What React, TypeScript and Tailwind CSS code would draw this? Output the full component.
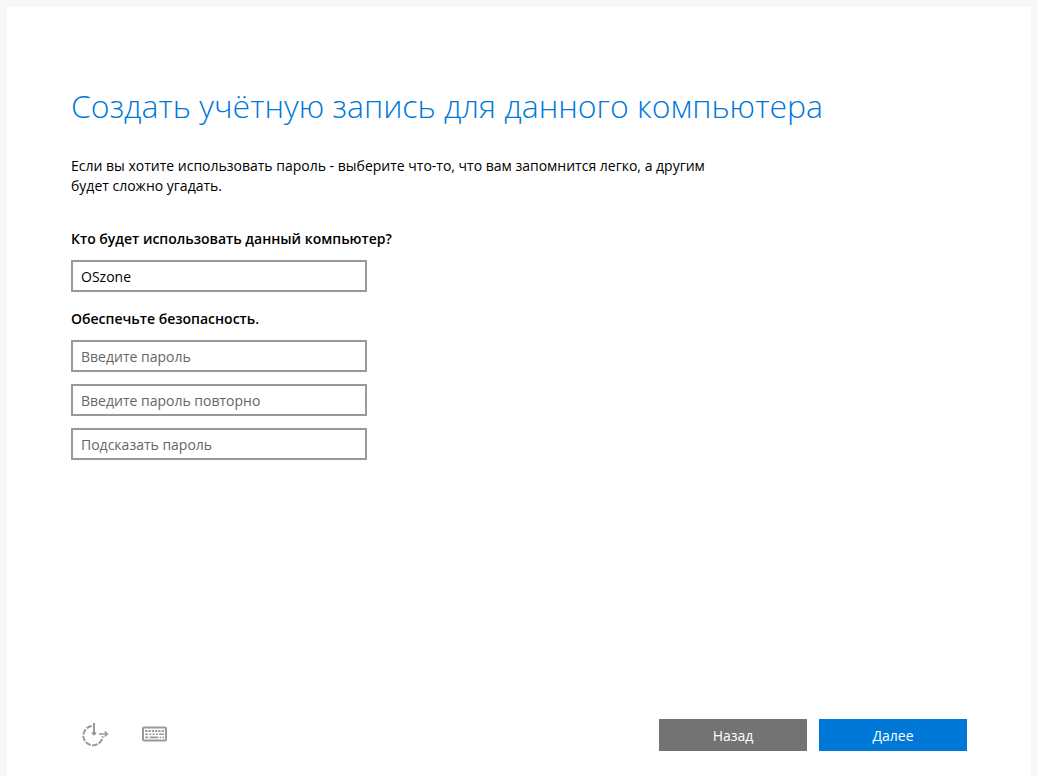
import { useState } from 'react';

const fieldClass =
  "h-8 w-full border-2 border-[#999999] bg-white px-2 text-sm text-black outline-none placeholder:text-[#666666]";

function EaseOfAccessIcon() {
  return (
    <svg className="size-8" viewBox="0 0 32 32" fill="none" stroke="#999999" strokeWidth="2" aria-hidden="true">
      <path d="M12.7 7a9.7 9.7 0 1 0 11 10.2" strokeDasharray="5.6 1.4" />
      <path d="M15 4v11.5" />
      <path d="M12.8 13.5l2.2 2.2 2.2-2.2" strokeWidth="1.6" />
      <path d="M20 15h8M25.8 12.5l2.5 2.5-2.5 2.5" strokeWidth="1.6" />
    </svg>
  );
}

function KeyboardIcon() {
  return (
    <svg className="size-8" viewBox="0 0 32 32" fill="none" stroke="#999999" aria-hidden="true">
      <rect x="4" y="8.5" width="23" height="13" rx="1" strokeWidth="2" />
      <path d="M6.2 12h18.8" strokeWidth="1.8" strokeDasharray="2.2 1.1" />
      <path d="M6.2 15.2h2.8M10.3 15.2h2M13.6 15.2h2M16.9 15.2h2M20.2 15.2h4.8" strokeWidth="1.6" />
      <path d="M6.2 18.4h3M10.7 18.4h8.5M20.6 18.4h1.6M23.4 18.4h1.6" strokeWidth="1.8" />
    </svg>
  );
}

export default function App() {
  const [name, setName] = useState('OSzone');
  return (
    <div className="flex min-h-screen bg-[#f8f8f8] pt-[7px] pr-[6px] pl-[7px] font-['Open_Sans','Noto_Sans',sans-serif] text-sm text-black">
      <main className="flex flex-1 flex-col bg-white px-16 pt-[76px] pb-[25px]">
        <h1 className="text-[32px] leading-[46px] font-light text-[#0078d7]">Создать учётную запись для данного компьютера</h1>
        <p className="mt-[27px] max-w-[660px] leading-5">
          Если вы хотите использовать пароль - выберите что-то, что вам запомнится легко, а другим будет сложно угадать.
        </p>
        <form id="account" className="mt-[33px] w-[296px]" onSubmit={(e) => e.preventDefault()}>
          <label htmlFor="user" className="block leading-5 font-semibold whitespace-nowrap">Кто будет использовать данный компьютер?</label>
          <input id="user" className={`mt-[11px] ${fieldClass}`} value={name} onChange={(e) => setName(e.target.value)} />
          <label htmlFor="password" className="mt-[17px] block leading-5 font-semibold">Обеспечьте безопасность.</label>
          <div className="mt-[11px] flex flex-col gap-3">
            <input id="password" type="password" className={fieldClass} placeholder="Введите пароль" />
            <input type="password" aria-label="Введите пароль повторно" className={fieldClass} placeholder="Введите пароль повторно" />
            <input aria-label="Подсказать пароль" className={fieldClass} placeholder="Подсказать пароль" />
          </div>
        </form>
        <footer className="mt-auto flex items-center justify-between">
          <div className="flex gap-7 pl-2">
            <button type="button" aria-label="Специальные возможности"><EaseOfAccessIcon /></button>
            <button type="button" aria-label="Экранная клавиатура"><KeyboardIcon /></button>
          </div>
          <div className="flex gap-3">
            <button type="button" className="h-8 w-[148px] bg-[#737373] pt-0.5 text-white">Назад</button>
            <button form="account" type="submit" className="h-8 w-[148px] bg-[#0078d7] pt-0.5 text-white">Далее</button>
          </div>
        </footer>
      </main>
    </div>
  );
}
